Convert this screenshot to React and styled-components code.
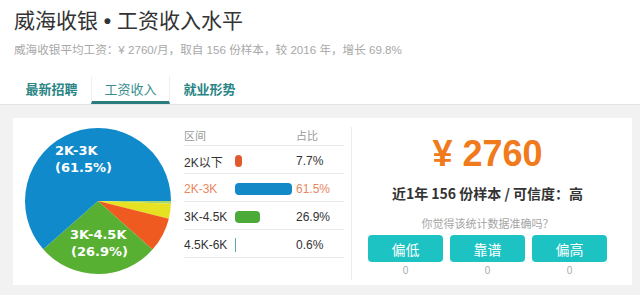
import React from "react";
import styled, { createGlobalStyle } from "styled-components";

const GlobalStyle = createGlobalStyle`
  body {
    margin: 0;
    background: #f2f2f2;
    font-family: "Liberation Sans", "Noto Sans CJK SC", sans-serif;
  }
`;

const slices = [
  { pct: 0.6, color: "#a8d86a" },
  { pct: 3.3, color: "#e6e222" },
  { pct: 7.7, color: "#ee5a1f" },
  { pct: 26.9, color: "#58b032" },
  { pct: 61.5, color: "#108acb" },
];

const rows = [
  { range: "2K以下", pct: 7.7, color: "#e05a2e" },
  { range: "2K-3K", pct: 61.5, color: "#1389c8", active: true },
  { range: "3K-4.5K", pct: 26.9, color: "#4caa38" },
  { range: "4.5K-6K", pct: 0.6, color: "#58b0a0" },
];

const arc = (cx, cy, r, a0, a1) => {
  const p = (a) => [cx + r * Math.cos(a), cy + r * Math.sin(a)];
  const [x0, y0] = p(a0);
  const [x1, y1] = p(a1);
  const large = a1 - a0 > Math.PI ? 1 : 0;
  return `M${cx},${cy} L${x0},${y0} A${r},${r} 0 ${large} 1 ${x1},${y1} Z`;
};

const Pie = () => {
  let start = 0;
  return (
    <PieSvg width="148" height="148" viewBox="0 0 148 148">
      {slices.map((s, i) => {
        const a0 = start;
        const a1 = start + (s.pct / 100) * Math.PI * 2;
        start = a1;
        return <path key={i} d={arc(74, 74, 73, a0, a1)} fill={s.color} />;
      })}
      <PieLabel x="31" y="28">2K-3K</PieLabel>
      <PieLabel x="31" y="45">(61.5%)</PieLabel>
      <PieLabel x="46" y="112">3K-4.5K</PieLabel>
      <PieLabel x="47" y="129">(26.9%)</PieLabel>
    </PieSvg>
  );
};

const App = () => {
  return (
    <>
      <GlobalStyle />
      <Header>
        <Title>
          威海收银<Dot> • </Dot>工资收入水平
        </Title>
        <Subtitle>
          威海收银平均工资：¥ 2760/月，取自 156 份样本，较 2016 年，增长 69.8%
        </Subtitle>
        <Tabs>
          <Tab>最新招聘</Tab>
          <Tab active>工资收入</Tab>
          <Tab>就业形势</Tab>
        </Tabs>
      </Header>
      <Card>
        <Pie />
        <Table>
          <HeadRow>
            <HeadCell>区间</HeadCell>
            <span />
            <HeadCell>占比</HeadCell>
          </HeadRow>
          {rows.map((r) => (
            <Row key={r.range} active={r.active}>
              <span>{r.range}</span>
              <BarCell>
                <Bar
                  color={r.color}
                  style={{ width: Math.max(1, r.pct * 0.93) }}
                  thin={r.pct < 1}
                />
              </BarCell>
              <span>{r.pct}%</span>
            </Row>
          ))}
        </Table>
        <Divider />
        <Summary>
          <Price>¥ 2760</Price>
          <Stats>近1年 156 份样本 / 可信度：高</Stats>
          <Question>你觉得该统计数据准确吗？</Question>
          <Votes>
            {["偏低", "靠谱", "偏高"].map((v) => (
              <Vote key={v}>
                <VoteButton>{v}</VoteButton>
                <VoteCount>0</VoteCount>
              </Vote>
            ))}
          </Votes>
        </Summary>
      </Card>
    </>
  );
};

export default App;

const Header = styled.div`
  background: #fff;
  padding: 7px 0 0 0;
  border-bottom: 1px solid #e2e2e2;
`;

const Title = styled.div`
  font-family: "Noto Sans CJK SC", sans-serif;
  font-size: 21px;
  line-height: 24px;
  color: #333;
  padding-left: 14px;
`;

const Dot = styled.span`
  font-family: "Liberation Sans", sans-serif;
  font-weight: 700;
`;

const Subtitle = styled.div`
  margin-top: 9px;
  padding-left: 14px;
  font-size: 11.6px;
  line-height: 16px;
  color: #a8a8a8;
`;

const Tabs = styled.div`
  display: flex;
  margin-top: 18px;
  padding-left: 12px;
`;

const Tab = styled.div`
  width: 79px;
  height: 28px;
  box-sizing: border-box;
  display: flex;
  align-items: center;
  justify-content: center;
  font-family: "Noto Sans CJK SC", sans-serif;
  font-size: 13px;
  font-weight: ${(p) => (p.active ? 400 : 700)};
  color: ${(p) => (p.active ? "#3a8f8f" : "#2a8585")};
  border-bottom: 3px solid ${(p) => (p.active ? "#2b7d7d" : "transparent")};
  border-left: 1px solid ${(p) => (p.active ? "#f0f0f0" : "transparent")};
  border-right: 1px solid ${(p) => (p.active ? "#f0f0f0" : "transparent")};
`;

const Card = styled.div`
  margin: 13px 0 0 13px;
  width: 619px;
  height: 167px;
  background: #fff;
  display: flex;
  align-items: flex-start;
`;

const PieSvg = styled.svg`
  display: block;
  margin: 9px 0 0 11px;
  flex-shrink: 0;
`;

const PieLabel = styled.text`
  font-family: "DejaVu Sans", sans-serif;
  font-weight: 700;
  font-size: 13px;
  fill: #fff;
`;

const Table = styled.div`
  width: 162px;
  margin: 6px 0 0 12px;
  font-size: 12px;
  color: #333;
`;

const HeadRow = styled.div`
  display: grid;
  grid-template-columns: 51px 61px 1fr;
  height: 21px;
  align-items: center;
  border-bottom: 1px solid #eaeaea;
`;

const HeadCell = styled.span`
  color: #9a9a9a;
  font-size: 11px;
`;

const Row = styled.div`
  display: grid;
  grid-template-columns: 51px 61px 1fr;
  height: 28px;
  box-sizing: border-box;
  padding-top: 3px;
  align-items: center;
  border-bottom: 1px solid #eaeaea;
  color: ${(p) => (p.active ? "#e8875e" : "#333")};
`;

const BarCell = styled.span`
  display: flex;
  align-items: center;
`;

const Bar = styled.span`
  display: block;
  height: ${(p) => (p.thin ? "14px" : "12px")};
  border-radius: ${(p) => (p.thin ? "0" : "4px")};
  background: ${(p) => p.color};
`;

const Divider = styled.div`
  width: 1px;
  align-self: stretch;
  margin: 9px 0 5px 7px;
  background: #ececec;
`;

const Summary = styled.div`
  flex: 1;
  display: flex;
  flex-direction: column;
  align-items: center;
  padding: 16px 25px 0 16px;
`;

const Price = styled.div`
  font-size: 36px;
  line-height: 40px;
  font-weight: 700;
  color: #f07a1c;
`;

const Stats = styled.div`
  margin-top: 9px;
  font-family: "Noto Sans CJK SC", sans-serif;
  font-size: 14px;
  line-height: 20px;
  font-weight: 700;
  color: #333;
`;

const Question = styled.div`
  margin-top: 13px;
  font-size: 11px;
  line-height: 16px;
  color: #a5a5a5;
`;

const Votes = styled.div`
  margin-top: 3px;
  display: flex;
  gap: 7px;
`;

const Vote = styled.div`
  display: flex;
  flex-direction: column;
  align-items: center;
`;

const VoteButton = styled.div`
  width: 75px;
  height: 27px;
  border-radius: 4px;
  background: #1dc3c3;
  color: #fff;
  font-family: "Noto Sans CJK SC", sans-serif;
  font-size: 14px;
  display: flex;
  align-items: center;
  justify-content: center;
`;

const VoteCount = styled.div`
  margin-top: 2px;
  font-size: 10px;
  line-height: 14px;
  color: #aaa;
`;
